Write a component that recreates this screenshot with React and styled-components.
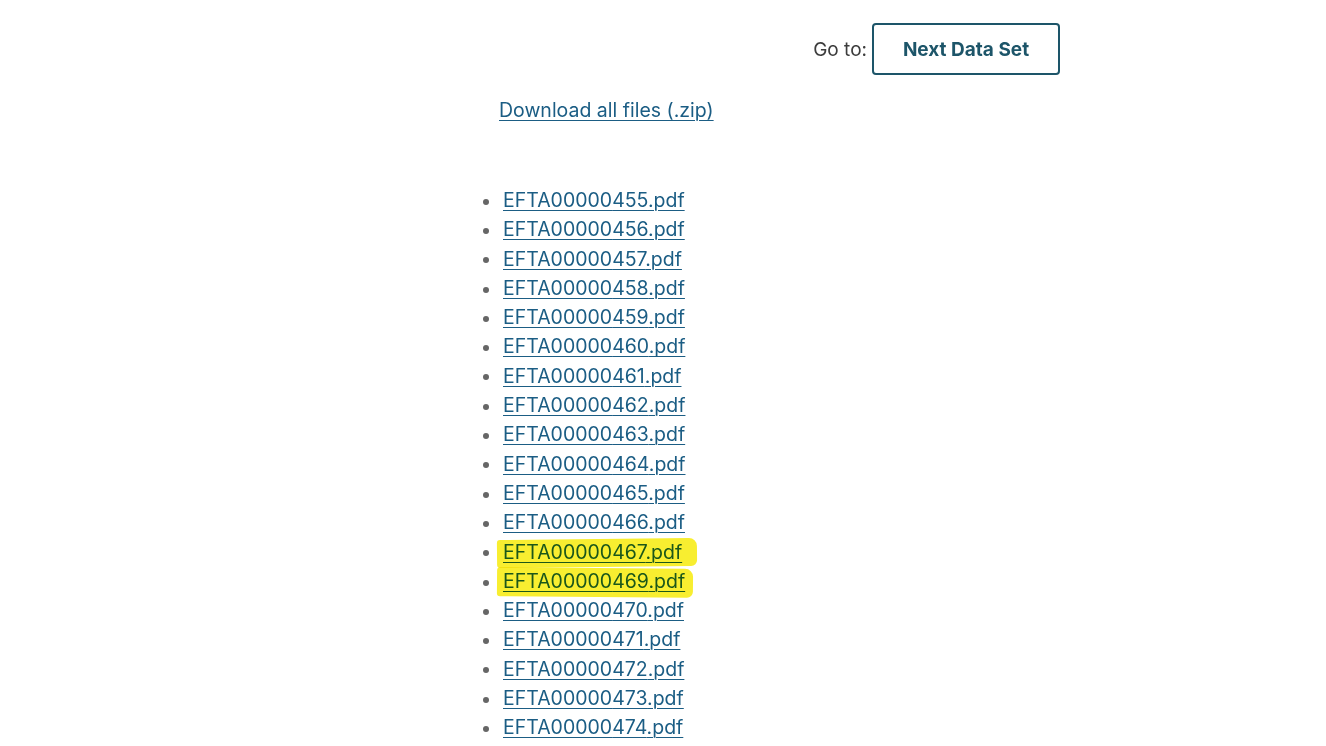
import React from "react";
import styled, { createGlobalStyle } from "styled-components";

const Global = createGlobalStyle`
  html, body { margin: 0; padding: 0; background: #fff; }
  body { font-family: "Inter", "Noto Sans", "Liberation Sans", sans-serif; }
`;

const Page = styled.div`
  width: 1326px;
  height: 746px;
  overflow: hidden;
  display: flex;
  justify-content: flex-start;
`;

const Column = styled.main`
  margin-left: 474px;
  width: 586px;
  display: flex;
  flex-direction: column;
`;

const TopBar = styled.div`
  display: flex;
  justify-content: flex-end;
  align-items: center;
  gap: 5px;
  padding-top: 23px;
`;

const GoLabel = styled.span`
  font-size: 19px;
  color: #3d3d3d;
`;

const NavButton = styled.button`
  box-sizing: border-box;
  width: 188px;
  height: 52px;
  background: #fff;
  border: 2px solid #1d5569;
  border-radius: 4px;
  color: #1d5569;
  font-family: inherit;
  font-size: 19px;
  font-weight: 700;
  cursor: pointer;
`;

const DownloadRow = styled.div`
  padding-left: 25px;
  margin-top: 22px;
  line-height: 26px;
`;

const Link = styled.a`
  color: #1b5d84;
  font-size: 19.5px;
  text-decoration: underline;
  text-decoration-thickness: 1px;
  text-underline-offset: 3px;
`;

const FileList = styled.ul`
  margin: 62px 0 0 0;
  padding-left: 9px;
  list-style: none;
`;

const Item = styled.li`
  position: relative;
  display: flex;
  align-items: center;
  gap: 14px;
  height: 29.3px;
  line-height: 29.3px;
  font-size: 19.5px;
  &::before {
    content: "";
    flex: none;
    width: 6px;
    height: 6px;
    border-radius: 50%;
    background: #666;
    margin-top: 2px;
  }
`;

const Highlight = styled.span`
  position: absolute;
  left: ${(p) => p.$left}px;
  top: ${(p) => p.$top}px;
  width: ${(p) => p.$w}px;
  height: ${(p) => p.$h}px;
  background: #f8ee30;
  mix-blend-mode: multiply;
  border-radius: 3px 8px 6px 3px;
  transform: rotate(${(p) => p.$rot}deg);
  pointer-events: none;
`;

const files = [455, 456, 457, 458, 459, 460, 461, 462, 463, 464, 465, 466, 467, 469, 470, 471, 472, 473, 474];
const marks = {
  467: { left: 14, top: 1, w: 200, h: 28, rot: -0.6 },
  469: { left: 14, top: 1, w: 196, h: 29, rot: 0.5 },
};

export default function App() {
  return (
    <Page>
      <Global />
      <Column>
        <TopBar>
          <GoLabel>Go to:</GoLabel>
          <NavButton>Next Data Set</NavButton>
        </TopBar>
        <DownloadRow>
          <Link href="#">Download all files (.zip)</Link>
        </DownloadRow>
        <FileList>
          {files.map((n) => (
            <Item key={n}>
              <Link href="#">EFTA00000{n}.pdf</Link>
              {marks[n] && (
                <Highlight
                  $left={marks[n].left}
                  $top={marks[n].top}
                  $w={marks[n].w}
                  $h={marks[n].h}
                  $rot={marks[n].rot}
                />
              )}
            </Item>
          ))}
        </FileList>
      </Column>
    </Page>
  );
}
